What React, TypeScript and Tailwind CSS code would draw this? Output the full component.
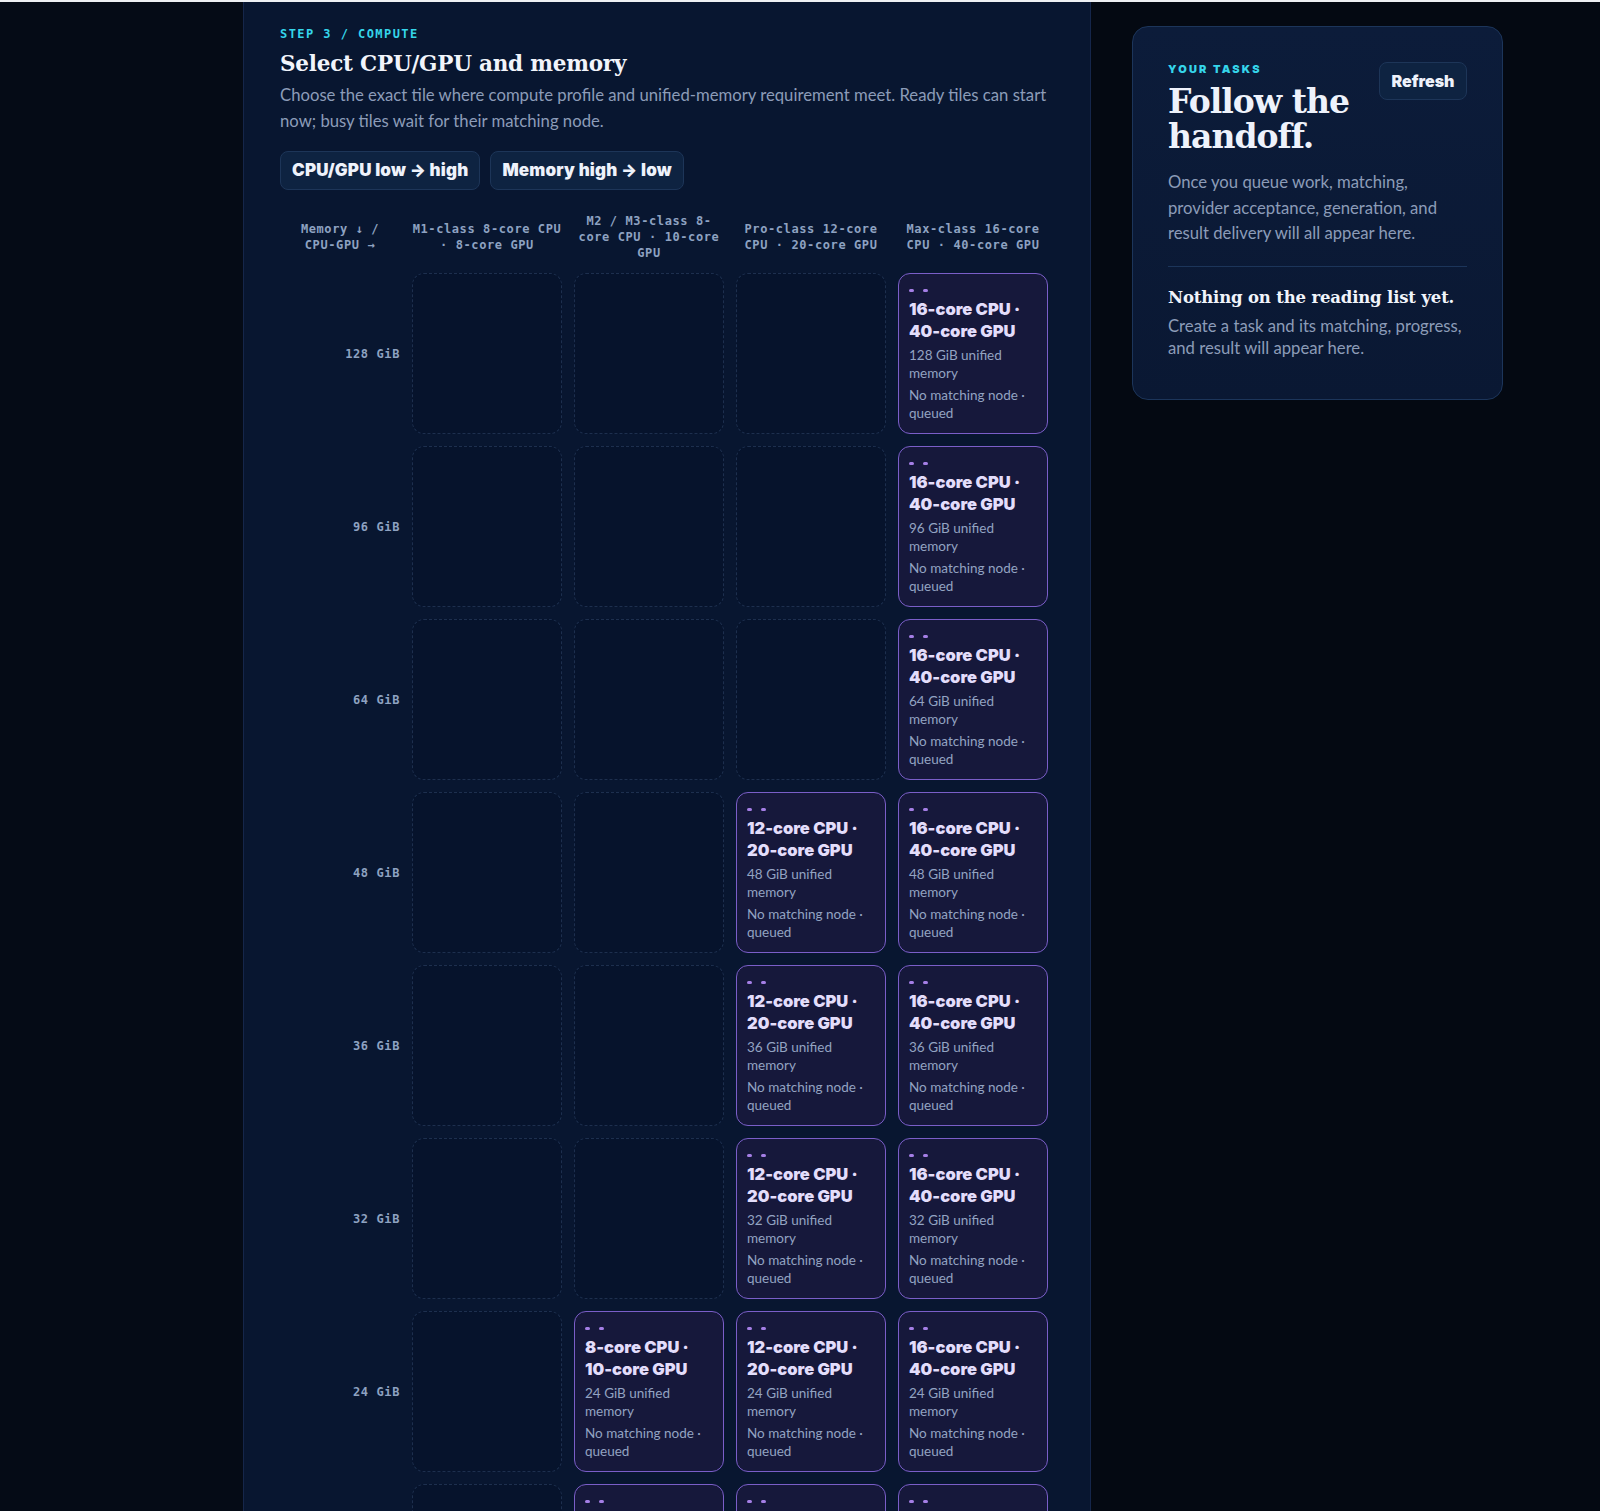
import React from "react";

const columns = [
  { label: "M1-class 8-core CPU · 8-core GPU", cpu: "8-core CPU", gpu: "8-core GPU" },
  { label: "M2 / M3-class 8-core CPU · 10-core GPU", cpu: "8-core CPU", gpu: "10-core GPU" },
  { label: "Pro-class 12-core CPU · 20-core GPU", cpu: "12-core CPU", gpu: "20-core GPU" },
  { label: "Max-class 16-core CPU · 40-core GPU", cpu: "16-core CPU", gpu: "40-core GPU" },
];

// which columns have a tile per memory row
const rows = [
  { mem: 128, filled: [false, false, false, true] },
  { mem: 96, filled: [false, false, false, true] },
  { mem: 64, filled: [false, false, false, true] },
  { mem: 48, filled: [false, false, true, true] },
  { mem: 36, filled: [false, false, true, true] },
  { mem: 32, filled: [false, false, true, true] },
  { mem: 24, filled: [false, true, true, true] },
  { mem: 16, filled: [false, true, true, true] },
];

const mono = "font-['DejaVu_Sans_Mono','Liberation_Mono',monospace]";
const serif = "font-['DejaVu_Serif','Liberation_Serif',serif]";
const heavy = "font-['Inter','Lato',sans-serif] font-black";

function BusyTile({ cpu, gpu, mem }: { cpu: string; gpu: string; mem: number }) {
  return (
    <div className="h-[161px] rounded-xl border-[1.5px] border-[#7a5ec8] bg-[#16183b] px-[10px] pt-[11px]">
      <div className="flex h-[10px] items-center gap-[9px]">
        <span className="h-[3px] w-[5px] rounded-full bg-[#a57fe6]" />
        <span className="h-[3px] w-[5px] rounded-full bg-[#a57fe6]" />
      </div>
      <div className={`${heavy} mt-[3px] text-[16.5px] leading-[22px] text-[#e3ddfb]`}>
        {cpu} ·<br />
        {gpu}
      </div>
      <div className="mt-[5px] text-[13.5px] leading-[17.5px] text-[#93a3c2]">{mem} GiB unified memory</div>
      <div className="mt-[5px] text-[13.5px] leading-[17.5px] text-[#93a3c2]">No matching node · queued</div>
    </div>
  );
}

function EmptyTile() {
  return <div className="h-[161px] rounded-xl border border-dashed border-[#1d2f4e] bg-[#06132c]" />;
}

export default function App() {
  return (
    <div className="min-h-screen bg-[#040912] font-['Lato','Noto_Sans',sans-serif]">
      <div className="h-[2px] bg-[#eef0f3]" />
      <div className="flex items-start">
        {/* left gutter */}
        <div className="w-[243px] shrink-0 self-stretch bg-[#050b16]" />

        {/* compute step */}
        <main className="w-[848px] shrink-0 border-x border-[#15264a] bg-[#081630] pb-10 pl-[36px] pr-[36px] pt-[24px]">
          <div className={`${mono} text-[12px] font-bold leading-4 tracking-[0.12em] text-[#35d5ea]`}>
            STEP 3 / COMPUTE
          </div>
          <h2 className={`${serif} mt-[6px] text-[21.5px] font-bold leading-8 tracking-[-0.01em] text-[#f1f4fb]`}>
            Select CPU/GPU and memory
          </h2>
          <p className="mt-[3px] text-[16.7px] leading-[25.5px] text-[#8c9cb8]">
            Choose the exact tile where compute profile and unified-memory requirement meet. Ready tiles can start
            now; busy tiles wait for their matching node.
          </p>

          <div className="mt-[17px] flex gap-[10px]">
            <button className={`${heavy} h-[39px] rounded-lg border border-[#1d3558] bg-[#0e2341] px-[11px] text-[17px] tracking-[0.01em] text-[#eef2fb]`}>
              CPU/GPU low → high
            </button>
            <button className={`${heavy} h-[39px] rounded-lg border border-[#1d3558] bg-[#0e2341] px-[11px] text-[17px] tracking-[0.01em] text-[#eef2fb]`}>
              Memory high → low
            </button>
          </div>

          <div className="mt-[23px] grid grid-cols-[120px_repeat(4,150px)] gap-[12px]">
            <div className={`${mono} flex h-[48px] items-center justify-center text-center text-[12px] font-bold leading-4 tracking-[0.05em] text-[#8ea2c1]`}>
              Memory ↓ /<br />CPU-GPU →
            </div>
            {columns.map((c) => (
              <div
                key={c.label}
                className={`${mono} flex h-[48px] items-center justify-center text-center text-[12px] font-bold leading-4 tracking-[0.05em] text-[#8ea2c1]`}
              >
                {c.label}
              </div>
            ))}

            {rows.map((r) => (
              <React.Fragment key={r.mem}>
                <div className={`${mono} flex h-[161px] items-center justify-end text-[12px] font-bold tracking-[0.05em] text-[#8ea2c1]`}>
                  {r.mem} GiB
                </div>
                {r.filled.map((f, i) =>
                  f ? (
                    <BusyTile key={i} cpu={columns[i].cpu} gpu={columns[i].gpu} mem={r.mem} />
                  ) : (
                    <EmptyTile key={i} />
                  )
                )}
              </React.Fragment>
            ))}
          </div>
        </main>

        {/* tasks card */}
        <aside className="ml-[41px] mt-[24px] w-[371px] shrink-0 rounded-2xl border border-[#1c355a] bg-gradient-to-b from-[#0c1c3a] to-[#0a1833] px-[35px] pb-[40px] pt-[35px]">
          <div className="flex items-start justify-between gap-4">
            <div>
              <div className={`${heavy} text-[11px] leading-[14px] tracking-[0.2em] text-[#35d5ea]`}>YOUR TASKS</div>
              <h1 className={`${serif} mt-2 text-[33px] font-bold leading-[35px] tracking-[-0.03em] text-[#eef2fb]`}>
                Follow the handoff.
              </h1>
            </div>
            <button className={`${heavy} h-[38px] w-[88px] shrink-0 rounded-lg border border-[#1d3558] bg-[#0e2341] text-[16px] text-[#eef2fb]`}>
              Refresh
            </button>
          </div>
          <p className="mt-[16px] text-[16.7px] leading-[25.5px] text-[#8c9cb8]">
            Once you queue work, matching, provider acceptance, generation, and result delivery will all appear here.
          </p>
          <div className="mt-[19px] h-px bg-[#1c355a]" />
          <div className={`${serif} mt-[17px] whitespace-nowrap text-[16.5px] font-bold leading-7 tracking-[-0.01em] text-[#f1f4fb]`}>
            Nothing on the reading list yet.
          </div>
          <p className="mt-[3px] text-[16.7px] leading-[22px] text-[#8c9cb8]">
            Create a task and its matching, progress, and result will appear here.
          </p>
        </aside>
      </div>
    </div>
  );
}
